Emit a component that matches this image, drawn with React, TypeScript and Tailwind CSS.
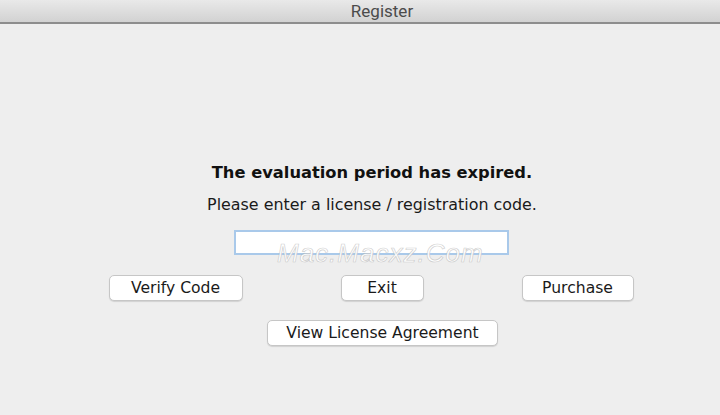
import React from 'react';

const font = { fontFamily: '"DejaVu Sans", "Liberation Sans", sans-serif' };

const MacButton: React.FC<{ label: string; className?: string }> = ({ label, className = '' }) => (
  <button
    className={`h-[26px] rounded-[5px] border border-[#c6c6c6] bg-white text-[15.6px] leading-[24px] text-[#1a1a1a] shadow-[0_1px_1px_rgba(0,0,0,0.12)] ${className}`}
  >
    {label}
  </button>
);

export default function App() {
  return (
    <div className="w-[720px] h-[415px] bg-[#eeeeee] overflow-hidden" style={font}>
      {/* Title bar */}
      <div className="h-[24px] bg-gradient-to-b from-[#e9e9e9] to-[#d2d2d2] border-b-2 border-[#8d8d8d] flex items-center justify-center">
        <span
          className="pl-[44px] text-[17px] leading-[20px] text-[#4b4b4b]"
          style={{ fontFamily: 'Roboto, "Liberation Sans", sans-serif' }}
        >
          Register
        </span>
      </div>

      {/* Body */}
      <div className="relative pt-[139px] flex flex-col items-center">
        <div className="pl-[24px] flex flex-col items-center">
          <h1 className="text-[16.3px] leading-[20px] font-bold text-[#111]">The evaluation period has expired.</h1>
          <p className="mt-[12px] text-[15.9px] leading-[20px] text-[#1a1a1a]">Please enter a license / registration code.</p>
          <input
            className="mt-[15px] w-[275px] h-[25px] bg-white border-2 border-[#a9c9ea] outline-none"
            aria-label="License code"
          />
        </div>

        <div className="mt-[20px] w-[525px] ml-[22px] flex justify-between">
          <MacButton label="Verify Code" className="w-[134px]" />
          <MacButton label="Exit" className="w-[83px]" />
          <MacButton label="Purchase" className="w-[112px]" />
        </div>

        <div className="mt-[19px] pl-[45px]">
          <MacButton label="View License Agreement" className="w-[231px]" />
        </div>

        {/* watermark */}
        <span
          className="absolute left-[277px] top-[214px] text-[26px] leading-[30px] italic tracking-[1px] text-white/90 pointer-events-none"
          style={{ fontFamily: '"Liberation Sans", sans-serif', WebkitTextStroke: '0.7px rgba(160,160,160,0.5)' }}
        >
          Mac.Macxz.Com
        </span>
      </div>
    </div>
  );
}
